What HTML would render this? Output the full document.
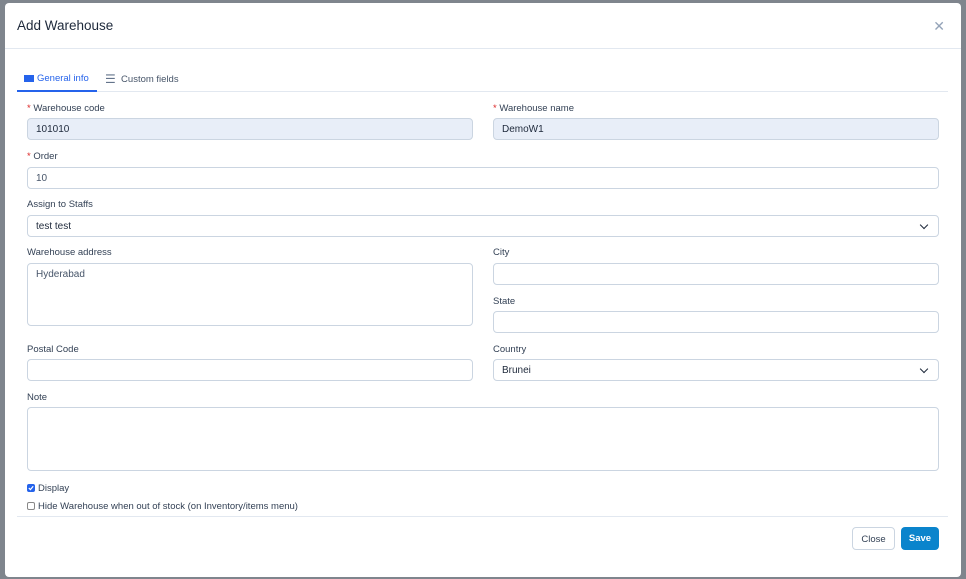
<!DOCTYPE html>
<html><head><style>
*{box-sizing:border-box;margin:0;padding:0}
body{width:966px;height:579px;background:#7f858d;font-family:"Liberation Sans",sans-serif;position:relative;overflow:hidden;color:#334155}
.m{position:absolute;left:5px;top:3px;width:956px;height:574px;background:#fff;border-radius:4px}
.hd{position:absolute;left:0;top:0;width:100%;height:46px;border-bottom:1px solid #e2e8f0}
.hd h4{position:absolute;left:12px;top:15px;font-size:13.5px;font-weight:normal;color:#1e293b}
.x{position:absolute;right:16px;top:15px;font-size:14px;color:#94a3b8}
.tabs{position:absolute;left:12px;top:62px;width:931px;height:27px;border-bottom:1px solid #e2e8f0;font-size:9.5px}
.t1{position:absolute;left:0;top:0;width:80px;height:27px;border-bottom:2px solid #2563eb;color:#2563eb;padding:8px 0 0 7px}
.t1 i{display:inline-block;width:10px;height:7px;background:#2563eb;margin-right:3px;vertical-align:-1px}
.t2{position:absolute;left:88px;top:7px;color:#475569}
.lbl{position:absolute;font-size:9.5px;color:#334155}
.lbl b{color:#dc2626;font-weight:normal}
.in{position:absolute;height:22px;border:1px solid #cbd5e1;border-radius:4px;font-size:10px;padding:5px 8px;color:#1e293b;background:#fff}
.ro{background:#e8eef8}
.sel:after{content:"";position:absolute;right:11px;top:6px;width:5px;height:5px;border-right:1.5px solid #1e293b;border-bottom:1.5px solid #1e293b;transform:rotate(45deg)}
.cb{position:absolute;font-size:9.5px;color:#334155}
.cb i{display:inline-block;width:8px;height:8px;border:1px solid #888;border-radius:2px;vertical-align:-1px;margin-right:3px;position:relative}
.ft{position:absolute;top:516px;width:931px;border-top:1px solid #e2e8f0}
.btn{position:absolute;height:23px;border-radius:4px;font-size:9.5px;text-align:center;padding-top:6px}
</style></head><body>
<div class="m">
<div class="hd"><h4>Add Warehouse</h4><span class="x">✕</span></div>
<div class="tabs"><div class="t1"><i></i>General info</div><div class="t2"><span style="color:#64748b;font-size:12px;vertical-align:-1px">☰</span>&nbsp; Custom fields</div></div>
</div>
<div class="lbl" style="left:27px;top:103px"><b>*</b> Warehouse code</div>
<div class="in ro" style="left:27px;top:118px;width:446px">101010</div>
<div class="lbl" style="left:493px;top:103px"><b>*</b> Warehouse name</div>
<div class="in ro" style="left:493px;top:118px;width:446px">DemoW1</div>
<div class="lbl" style="left:27px;top:151px"><b>*</b> Order</div>
<div class="in" style="left:27px;top:167px;width:912px;color:#475569">10</div>
<div class="lbl" style="left:27px;top:199px">Assign to Staffs</div>
<div class="in sel" style="left:27px;top:215px;width:912px">test test</div>
<div class="lbl" style="left:27px;top:247px">Warehouse address</div>
<div class="in" style="left:27px;top:263px;width:446px;height:63px;color:#475569">Hyderabad</div>
<div class="lbl" style="left:493px;top:247px">City</div>
<div class="in" style="left:493px;top:263px;width:446px"></div>
<div class="lbl" style="left:493px;top:296px">State</div>
<div class="in" style="left:493px;top:311px;width:446px"></div>
<div class="lbl" style="left:27px;top:344px">Postal Code</div>
<div class="in" style="left:27px;top:359px;width:446px"></div>
<div class="lbl" style="left:493px;top:344px">Country</div>
<div class="in sel" style="left:493px;top:359px;width:446px">Brunei</div>
<div class="lbl" style="left:27px;top:392px">Note</div>
<div class="in" style="left:27px;top:407px;width:912px;height:64px"></div>
<div class="cb" style="left:27px;top:483px"><i style="background:#2563eb;border-color:#2563eb"><svg width="6" height="6" viewBox="0 0 6 6" style="position:absolute;left:0;top:0"><path d="M0.8 3 L2.4 4.6 L5.2 1.2" stroke="#fff" stroke-width="1.2" fill="none"/></svg></i>Display</div>
<div class="cb" style="left:27px;top:501px"><i></i>Hide Warehouse when out of stock (on Inventory/items menu)</div>
<div class="ft" style="left:17px"></div>
<div class="btn" style="left:852px;width:43px;border:1px solid #cbd5e1;color:#334155;background:#fff;top:527px">Close</div>
<div class="btn" style="left:901px;width:38px;background:#0a84cc;color:#fff;font-weight:bold;top:527px">Save</div>
</body></html>
